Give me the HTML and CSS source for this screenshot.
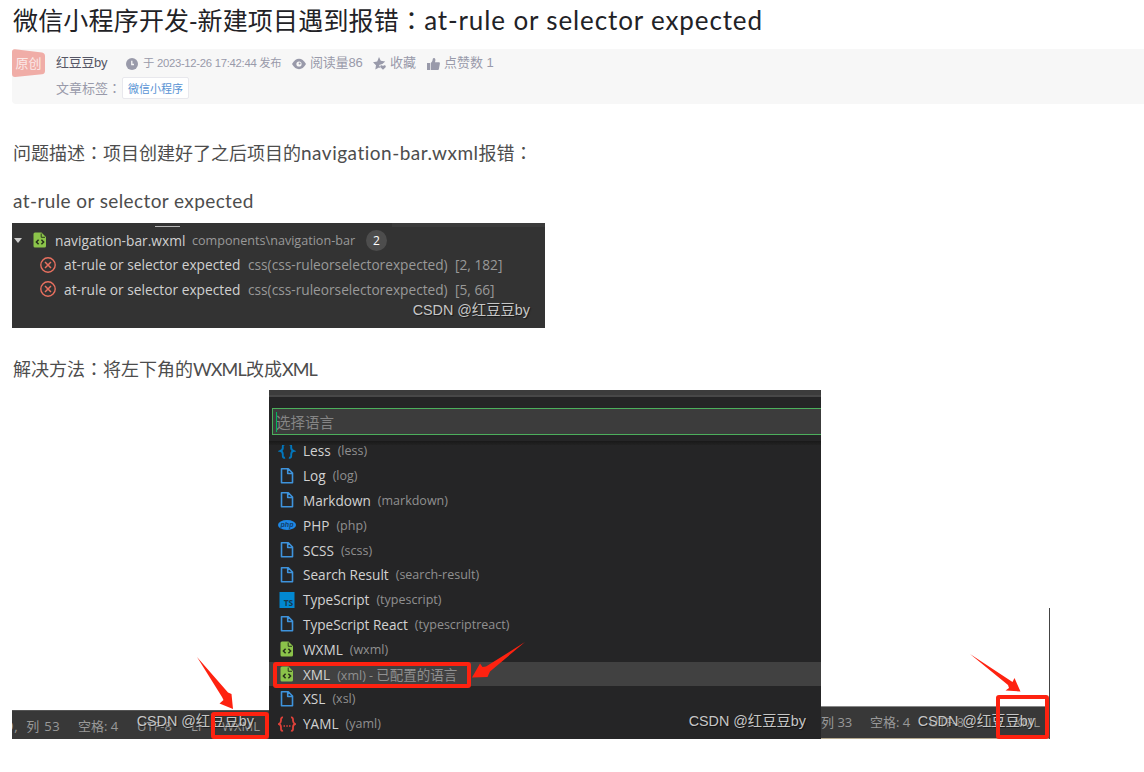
FILE: index.html
```
<!DOCTYPE html>
<html lang="zh-CN">
<head>
    <meta charset="UTF-8">
    <title>微信小程序开发-新建项目遇到报错：at-rule or selector expected</title>
    <link rel="stylesheet" href="styles.css">
</head>
<body>
    <!-- 公用图标 -->
    <svg class="sprite">
        <symbol id="i-file" viewBox="0 0 14 16">
            <path d="M1.500 .8h6.800l4.200 4.200v9.700h-11zM7.700 1v4.500h4.400" fill="none" stroke="#3e93dc" stroke-width="1.600" stroke-linejoin="round"/>
        </symbol>
        <symbol id="i-code" viewBox="0 0 14 16">
            <path d="M2 .5h6.500l4.500 4.500v9a1.500 1.500 0 0 1-1.500 1.500h-9.500a1.500 1.500 0 0 1-1.500-1.500v-12A1.500 1.500 0 0 1 2 .5z" fill="#8bc34a"/>
            <path d="M8.200 1.500v3.800H12" fill="none" stroke="#2b3a1c" stroke-width="1"/>
            <path d="M5.600 7.800L3.400 10l2.200 2.200M8.400 7.800l2.200 2.200-2.200 2.200" fill="none" stroke="#25301a" stroke-width="1.500"/>
        </symbol>
        <symbol id="i-error" viewBox="0 0 16 16">
            <circle cx="8" cy="8" r="7.200" fill="none" stroke="#e8705f" stroke-width="1.400"/>
            <path d="M5 5l6 6M11 5l-6 6" stroke="#e8705f" stroke-width="1.500"/>
        </symbol>
    </svg>

    <h1 class="title">微信小程序开发-新建项目遇到报错<span class="colon" lang="zh-TW">：</span><span class="en">at-rule or selector expected</span></h1>

    <div class="info-box">
        <div class="badge">
            <svg viewBox="0 0 33 28"><path d="M0 3Q0 0 3 .3L30 3.500Q33 4 33 7V22Q33 25 30 25.300L3 28Q0 28 0 25z" fill="#f0ada7"/></svg>
            <span>原创</span>
        </div>
        <div class="info">
            <div class="info-row">
                <span class="author">红豆豆by</span>
                <svg class="ico clock" viewBox="0 0 12 12"><circle cx="6" cy="6" r="6" fill="#999aaa"/><path d="M5.800 2.800v3.700h2.200" fill="none" stroke="#f7f7f7" stroke-width="1.300"/></svg>
                <span class="time">于 2023-12-26 17:42:44 发布</span>
                <svg class="ico eye" viewBox="0 0 14 12"><path d="M0 6Q3 .8 7 .8T14 6Q11 11.200 7 11.200T0 6z" fill="#999aaa"/><circle cx="7" cy="6" r="2.600" fill="#f7f7f7"/><circle cx="7.600" cy="5.600" r="1" fill="#999aaa"/></svg>
                <span class="read">阅读量86</span>
                <svg class="ico star" viewBox="0 0 13 13"><path d="M6 0l1.800 3.800 4.400.6-2.800 2.500-3.300 1.100 1.400 3.200L6 10.600l-3.700 1.900.7-4.200L0 5.300l4.200-.8z" fill="#999aaa"/><path d="M10 12.800L7.400 10.200c-.9-1.500 1.400-2.600 2.600-1.200 1.200-1.400 3.500-.3 2.600 1.200z" fill="#999aaa"/></svg>
                <span class="fav">收藏</span>
                <svg class="ico thumb" viewBox="0 0 13 12"><path d="M0 5h3v7H0zM3.700 5C5.500 3.800 5.500 2.500 5.800.8 6.300-.4 8.400-.1 8.400 2c0 1-.3 1.600-.4 2.300h3.800c.8 0 1.200.6 1.100 1.300l-1 5.400c-.1.600-.6 1-1.200 1h-7z" fill="#999aaa"/></svg>
                <span class="like">点赞数 1</span>
            </div>
            <div class="tag-row">
                <span>文章标签<span class="colon" lang="zh-TW">：</span></span>
                <a class="tag">微信小程序</a>
            </div>
        </div>
    </div>

    <div class="content">
        <p>问题描述<span class="colon" lang="zh-TW">：</span>项目创建好了之后项目的<span class="en nav">navigation-bar.wxml</span>报错<span class="colon" lang="zh-TW">：</span></p>
        <p class="second"><span class="en rule">at-rule or selector expected</span></p>

        <div class="problems">
            <i class="line"></i>
            <i class="strip"></i>
            <div class="p-file">
                <i class="caret"></i>
                <svg class="p-icon"><use href="#i-code"/></svg>
                <span class="p-name">navigation-bar.wxml</span>
                <span class="p-path">components\navigation-bar</span>
                <span class="count">2</span>
            </div>
            <div class="p-item">
                <svg class="p-err"><use href="#i-error"/></svg>
                <span class="p-msg">at-rule or selector expected</span>
                <span class="p-src">css(css-ruleorselectorexpected)</span>
                <span class="p-pos">[2, 182]</span>
            </div>
            <div class="p-item">
                <svg class="p-err"><use href="#i-error"/></svg>
                <span class="p-msg">at-rule or selector expected</span>
                <span class="p-src">css(css-ruleorselectorexpected)</span>
                <span class="p-pos">[5, 66]</span>
            </div>
            <span class="watermark">CSDN @红豆豆by</span>
        </div>

        <p class="third">解决方法<span class="colon" lang="zh-TW">：</span>将左下角的<span class="en wx">WXML</span>改成<span class="en wx">XML</span></p>

        <div class="shots">
            <div class="shot before">
                <div class="status">
                    <span>9,&nbsp; 列 53</span>
                    <span>空格: 4</span>
                    <span>UTF-8</span>
                    <span>LF</span>
                    <span>WXML</span>
                </div>
                <span class="watermark">CSDN @红豆豆by</span>
                <i class="mark"></i>
                <svg class="arrow" viewBox="0 0 40 54"><path d="M0 0L31 35.500 34.500 37 36 52 22.500 46.500 26.500 43 25 40z" fill="#fe2210"/></svg>
            </div>

            <div class="shot picker">
                <div class="topbar"></div>
                <div class="search">选择语言</div>
                <i class="shade"></i>
                <ul class="langs">
                    <li><svg class="l-icon" viewBox="0 0 18 16"><path d="M7 1.500Q4.500 1 4.800 4T2.500 8Q5 8.500 4.800 12T7 14.500M11 1.500Q13.500 1 13.200 4T15.500 8Q13 8.500 13.200 12T11 14.500" fill="none" stroke="#0277bd" stroke-width="1.900"/></svg><b>Less</b><em>(less)</em></li>
                    <li><svg class="l-icon"><use href="#i-file"/></svg><b>Log</b><em>(log)</em></li>
                    <li><svg class="l-icon"><use href="#i-file"/></svg><b>Markdown</b><em>(markdown)</em></li>
                    <li><svg class="l-icon" viewBox="0 0 18 16"><ellipse cx="9" cy="8" rx="9" ry="5" fill="#1e88e5"/><text x="9" y="10.200" class="php">php</text></svg><b>PHP</b><em>(php)</em></li>
                    <li><svg class="l-icon"><use href="#i-file"/></svg><b>SCSS</b><em>(scss)</em></li>
                    <li><svg class="l-icon"><use href="#i-file"/></svg><b>Search Result</b><em>(search-result)</em></li>
                    <li><svg class="l-icon" viewBox="0 0 18 16"><path d="M1.500 0h15v16h-15z" fill="#0288d1"/><text x="10.500" y="14" class="ts">TS</text></svg><b>TypeScript</b><em>(typescript)</em></li>
                    <li><svg class="l-icon"><use href="#i-file"/></svg><b>TypeScript React</b><em>(typescriptreact)</em></li>
                    <li><svg class="l-icon"><use href="#i-code"/></svg><b>WXML</b><em>(wxml)</em></li>
                    <li class="active"><svg class="l-icon"><use href="#i-code"/></svg><b>XML</b><em>(xml) - <span>已配置的语言</span></em></li>
                    <li><svg class="l-icon"><use href="#i-file"/></svg><b>XSL</b><em>(xsl)</em></li>
                    <li><svg class="l-icon" viewBox="0 0 18 16"><path d="M5 1.500Q2.800 1.200 3 4T.8 8Q3.200 8.500 3 12T5 14.500M13 1.500Q15.200 1.200 15 4T17.200 8Q14.800 8.500 15 12T13 14.500" fill="none" stroke="#e0423a" stroke-width="1.800"/><path d="M5.500 10h1.500M8.300 10h1.500M11 10h1.500" stroke="#e0423a" stroke-width="1.500"/></svg><b>YAML</b><em>(yaml)</em></li>
                </ul>
                <span class="watermark">CSDN @红豆豆by</span>
                <i class="mark"></i>
                <svg class="arrow" viewBox="0 0 54 36"><path d="M53 0L18 29.500 15.500 35 0 35.500 8 21.500 10.500 25 14 24.500z" fill="#fe2210"/></svg>
            </div>

            <div class="shot after">
                <div class="status">
                    <span>列 33</span>
                    <span>空格: 4</span>
                    <span>UTF-8</span>
                    <span>LF</span>
                    <span>XML</span>
                </div>
                <span class="watermark">CSDN @红豆豆by</span>
                <i class="mark"></i>
                <svg class="arrow" viewBox="0 0 52 40"><path d="M0 0L42.500 28 44.500 24 50.500 37.500 35.500 36.500 39 34 38 31z" fill="#fe2210"/></svg>
            </div>
        </div>
    </div>
</body>
</html>
```
FILE: styles.css
```
* {
    margin: 0;
    padding: 0;
    box-sizing: border-box;
}

body {
    padding-left: 12px;
    background: #fff;
    color: #4d4d4d;
    font-family: "Open Sans", "Noto Sans CJK SC", sans-serif;
    overflow: hidden;
}

i, em {
    font-style: normal;
}

svg {
    flex-shrink: 0;
}

.sprite {
    position: absolute;
    width: 0;
    height: 0;
}

.en {
    font-family: Lato, sans-serif;
    line-height: 1;
}

/* 冒号居中 */
.colon {
    font-family: "Noto Sans CJK TC", sans-serif;
    line-height: 1;
}

.title {
    height: 49px;
    padding: 2px 0 0 1px;
    font: 400 25px/38px "Open Sans", "Noto Sans CJK SC", sans-serif;
    color: #222226;
    letter-spacing: .180px;
    line-height: 37px;
    white-space: nowrap;
}

.title .en {
    font-size: 26px;
    letter-spacing: .880px;
}

/* 文章信息 */
.info-box {
    display: flex;
    height: 55px;
    background: #f7f7f7;
    border-radius: 4px 0 0 4px;
}

.badge {
    position: relative;
    width: 33px;
    height: 28px;
    margin-right: 11px;
    color: #fbe9e7;
    font: 13px/28px "Noto Sans CJK SC", sans-serif;
    text-align: center;
}

.badge svg {
    position: absolute;
    left: 0;
    top: 0;
    width: 33px;
    height: 28px;
}

.badge span {
    position: relative;
}

.info {
    font: 13px/27px "Liberation Sans", "Noto Sans CJK SC", sans-serif;
    color: #999aaa;
}

.info-row, .tag-row {
    display: flex;
    align-items: center;
    height: 27px;
    white-space: nowrap;
}

.author {
    width: 70px;
    color: #555666;
    letter-spacing: -.3px;
}

.ico {
    height: 12px;
    margin-top: 2px;
}

.clock { width: 12px; margin-right: 5px; }
.eye { width: 14px; margin-right: 4px; }
.star { width: 13px; height: 13px; margin-right: 4px; }
.thumb { width: 13px; margin-right: 4px; }
.time { width: 149px; padding-top: 1px; font-size: 11.300px; letter-spacing: -.28px; }
.read { width: 63px; letter-spacing: -.2px; }
.fav { width: 37px; }

.tag-row {
    height: 24px;
}

.tag {
    height: 22px;
    margin-left: 1px;
    padding: 0 5px;
    border: 1px solid #e8e8ed;
    border-radius: 2px;
    background: #fff;
    color: #5893d4;
    font-size: 11px;
    line-height: 22px;
}

/* 正文 */
.content p {
    height: 28px;
    margin-top: 35px;
    padding-left: 1px;
    font: 18px/28px Lato, "Noto Sans CJK SC", sans-serif;
    white-space: nowrap;
}

.content .second {
    margin-top: 20px;
}

.content .third {
    margin-top: 27px;
}

.nav { font-size: 19px; letter-spacing: .5px; }
.rule { font-size: 19px; letter-spacing: .4px; }
.wx { letter-spacing: -.850px; }

.problems {
    position: relative;
    width: 533px;
    height: 105px;
    margin-top: 8px;
    padding-top: 5px;
    background: #333;
    color: #d0d0d0;
    font-size: 13.750px;
}

.line {
    position: absolute;
    left: 143px;
    top: 3px;
    width: 25px;
    height: 1px;
    background: #b5b5b5;
}

.strip {
    position: absolute;
    left: 380px;
    right: 0;
    top: 0;
    height: 4px;
    background: #3b3b3b;
}

.p-file, .p-item {
    display: flex;
    align-items: center;
    height: 24.500px;
    white-space: nowrap;
}

.caret {
    margin: 0 11px 0 2px;
    border: 4px solid transparent;
    border-top: 5px solid #ccc;
    border-bottom: 0;
}

.p-icon {
    width: 14px;
    height: 16px;
}

.p-name {
    margin-left: 8px;
    width: 137px;
}

.p-path {
    width: 174px;
    font-size: 12.600px;
    color: #999;
}

.count {
    width: 21px;
    height: 21px;
    border-radius: 50%;
    background: #4d4d4d;
    color: #fff;
    font-size: 12px;
    line-height: 21px;
    text-align: center;
}

.p-item {
    padding-left: 28px;
}

.p-err {
    width: 16px;
    height: 16px;
    margin-right: 8px;
}

.p-msg {
    width: 184px;
}

.p-src {
    width: 207px;
}

.p-src, .p-pos {
    color: #999;
    font-size: 13.700px;
}

.watermark {
    position: absolute;
    right: 15px;
    bottom: 8px;
    color: #c6c6c6;
    font: 14.350px/20px "Liberation Sans", "Noto Sans CJK SC", sans-serif;
    text-shadow: 1px 1px 1px rgba(0, 0, 0, .5);
    white-space: nowrap;
}

/* 三张截图底部对齐 */
.shots {
    display: flex;
    align-items: flex-end;
    height: 349px;
    margin-top: 7px;
}

.shot {
    position: relative;
    flex-shrink: 0;
}

.status {
    display: flex;
    align-items: center;
    overflow: hidden;
    background: #383838;
    border-top: 1px solid #555;
    color: #989898;
    font-size: 13px;
    white-space: nowrap;
}

.mark {
    position: absolute;
    border: 4px solid #fe2210;
    border-radius: 3px;
}

.arrow {
    position: absolute;
}

.before {
    width: 257px;
}

.before .status {
    height: 29px;
    padding: 1px 0 0;
    text-indent: -6px;
}

.before .status span:nth-child(1) { width: 72px; letter-spacing: .7px; }
.before .status span:nth-child(2) { width: 59px; }
.before .status span:nth-child(3) { width: 54px; }
.before .status span:nth-child(4) { width: 31px; }

.before .mark {
    right: 0;
    bottom: 0;
    width: 58px;
    height: 27px;
}

.before .arrow {
    left: 185px;
    bottom: 28px;
    width: 40px;
    height: 54px;
}

.picker {
    width: 552px;
    height: 349px;
    background: #252526;
    overflow: hidden;
}

.topbar {
    height: 7px;
    background: #3c3c3c;
    border-bottom: 2px solid #484848;
}

.search {
    height: 27px;
    margin: 11px 0 0 3px;
    padding-left: 3px;
    border: 1px solid #4caf5c;
    border-right: 0;
    background: #3c3c3c;
    color: #858585;
    font-size: 14.500px;
    line-height: 27px;
}

.search::before {
    content: "";
    position: absolute;
    left: 7px;
    top: 22px;
    width: 1px;
    height: 20px;
    background: #00b95c;
}

.shade {
    position: absolute;
    left: 0;
    right: 0;
    top: 51px;
    height: 4px;
    background: linear-gradient(#191919, #222);
}

.langs {
    margin-top: 3.500px;
    list-style: none;
}

.langs li {
    display: flex;
    align-items: center;
    height: 24.800px;
    padding-left: 9px;
    color: #d2d2d2;
    font-size: 13.600px;
    white-space: nowrap;
}

.langs .active {
    background: #414141;
}

.l-icon {
    width: 18px;
    height: 16px;
    margin-right: 7px;
}

.langs b {
    font-weight: 400;
}

.langs em {
    margin-left: 7px;
    color: #909090;
    font-size: 12.500px;
}

.langs em span {
    font-size: 13.500px;
}

.php {
    fill: #123f6b;
    font: italic bold 7px "Liberation Sans", sans-serif;
    text-anchor: middle;
}

.ts {
    fill: #17394d;
    font: bold 8.500px "Open Sans", sans-serif;
    text-anchor: middle;
}

.picker .mark {
    left: 4px;
    top: 272px;
    width: 198px;
    height: 26px;
}

.picker .arrow {
    left: 203px;
    top: 252px;
    width: 54px;
    height: 36px;
}

.after {
    width: 229px;
    height: 131px;
    padding-top: 98px;
    border-right: 1px solid #444;
}

.after .status {
    height: 33px;
    padding-bottom: 2px;
    border-top-color: #888;
    border-bottom: 1px solid #b5a98f;
}

.after .status span:nth-child(1) { width: 49px; }
.after .status span:nth-child(2) { width: 59px; }
.after .status span:nth-child(3) { width: 59px; }
.after .status span:nth-child(4) { width: 26px; }

.after .watermark {
    right: 14px;
}

.after .mark {
    right: 0;
    bottom: 0;
    width: 53px;
    height: 44px;
}

.after .arrow {
    left: 149px;
    top: 46px;
    width: 52px;
    height: 40px;
}
```
